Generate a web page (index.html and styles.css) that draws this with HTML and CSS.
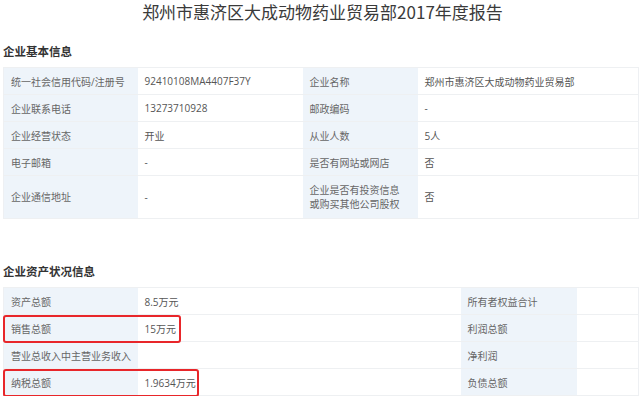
FILE: index.html
```html
<!DOCTYPE html>
<html lang="zh-CN">
<head>
    <meta charset="UTF-8">
    <meta name="viewport" content="width=device-width, initial-scale=1.0">
    <title>2017年度报告</title>
    <link rel="stylesheet" href="styles.css">
</head>
<body>
    <div class="report">
        <h1 class="report-title">郑州市惠济区大成动物药业贸易部2017年度报告</h1>

        <h2 class="section-title first">企业基本信息</h2>
        <table class="info-table basic">
            <colgroup>
                <col class="c1"><col class="c2"><col class="c3"><col class="c4">
            </colgroup>
            <tr>
                <td class="label">统一社会信用代码/注册号</td>
                <td>92410108MA4407F37Y</td>
                <td class="label">企业名称</td>
                <td>郑州市惠济区大成动物药业贸易部</td>
            </tr>
            <tr>
                <td class="label">企业联系电话</td>
                <td>13273710928</td>
                <td class="label">邮政编码</td>
                <td>-</td>
            </tr>
            <tr>
                <td class="label">企业经营状态</td>
                <td>开业</td>
                <td class="label">从业人数</td>
                <td>5人</td>
            </tr>
            <tr>
                <td class="label">电子邮箱</td>
                <td>-</td>
                <td class="label">是否有网站或网店</td>
                <td>否</td>
            </tr>
            <tr class="tall">
                <td class="label">企业通信地址</td>
                <td>-</td>
                <td class="label">企业是否有投资信息<br>或购买其他公司股权</td>
                <td>否</td>
            </tr>
        </table>

        <h2 class="section-title second">企业资产状况信息</h2>
        <div class="table-wrap">
            <table class="info-table assets">
                <colgroup>
                    <col class="c1"><col class="c2"><col class="c3"><col class="c4">
                </colgroup>
                <tr>
                    <td class="label">资产总额</td>
                    <td>8.5万元</td>
                    <td class="label">所有者权益合计</td>
                    <td></td>
                </tr>
                <tr>
                    <td class="label">销售总额</td>
                    <td>15万元</td>
                    <td class="label">利润总额</td>
                    <td></td>
                </tr>
                <tr>
                    <td class="label">营业总收入中主营业务收入</td>
                    <td></td>
                    <td class="label">净利润</td>
                    <td></td>
                </tr>
                <tr>
                    <td class="label">纳税总额</td>
                    <td>1.9634万元</td>
                    <td class="label">负债总额</td>
                    <td></td>
                </tr>
            </table>
            <div class="mark mark-sales"></div>
            <div class="mark mark-tax"></div>
        </div>
    </div>
</body>
</html>
```

FILE: styles.css
```css
* {
    margin: 0;
    padding: 0;
    box-sizing: border-box;
}

body {
    font-family: "Open Sans", "Noto Sans CJK SC", sans-serif;
    background-color: #fff;
    color: #555;
}

.report {
    width: 640px;
    padding: 0 2px 0 3px;
}

.report-title {
    font-family: "Noto Sans CJK SC", sans-serif;
    font-size: 17px;
    font-weight: normal;
    line-height: 25px;
    color: #3a3a3a;
    text-align: center;
    padding-left: 4px;
    margin-top: -1px;
}

.section-title {
    font-family: "Noto Sans CJK SC", sans-serif;
    font-size: 11.5px;
    font-weight: bold;
    line-height: 20px;
    color: #333;
}

.section-title.first {
    margin-top: 17px;
    margin-bottom: 6px;
}

.section-title.second {
    margin-top: 42px;
    margin-bottom: 6px;
}

.info-table {
    width: 635px;
    border-collapse: collapse;
    table-layout: fixed;
    border: 1px solid #eef0f3;
    font-size: 10px;
}

.info-table td {
    height: 27px;
    padding: 0 7px;
    border-top: 1px solid #eef0f2;
    border-bottom: 1px solid #eef0f2;
    vertical-align: middle;
    white-space: nowrap;
    color: #555;
}

.info-table td.label {
    background-color: #eef4fa;
    color: #666;
}

.info-table tr.tall td {
    height: 43px;
    line-height: 14px;
}

.basic .c1 { width: 134px; }
.basic .c2 { width: 165px; }
.basic .c3 { width: 115px; }
.basic .c4 { width: 221px; }

.assets .c1 { width: 134px; }
.assets .c2 { width: 323px; }
.assets .c3 { width: 116px; }
.assets .c4 { width: 62px; }

.table-wrap {
    position: relative;
}

.mark {
    position: absolute;
    left: 0;
    height: 28px;
    border: 2px solid #e8262a;
    border-radius: 3px;
}

.mark-sales {
    top: 28px;
    width: 178px;
}

.mark-tax {
    top: 82px;
    width: 196px;
}
```
